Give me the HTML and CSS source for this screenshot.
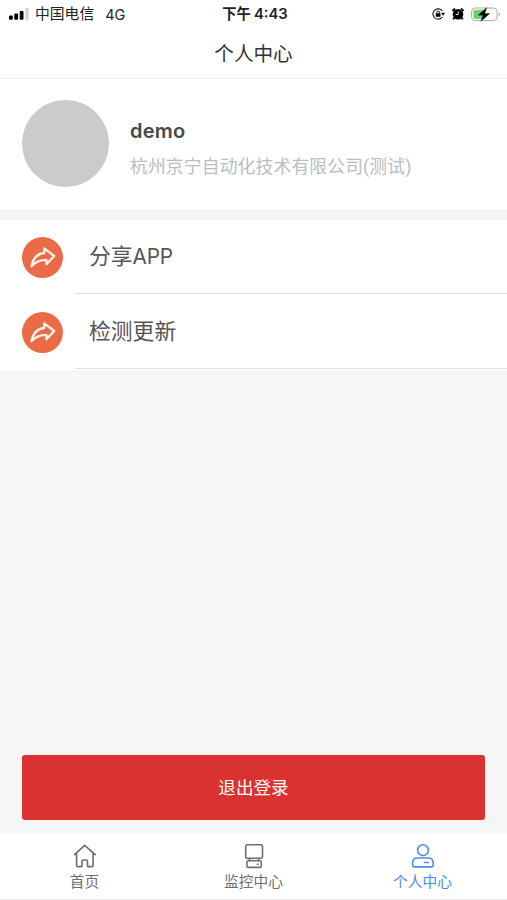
FILE: index.html
```html
<!DOCTYPE html>
<html lang="zh-CN">
<head>
<meta charset="utf-8">
<title>个人中心</title>
<link rel="stylesheet" href="styles.css">
</head>
<body>
<div class="app">
  <div class="status">
    <div class="carrier">
      <svg width="20" height="12" viewBox="0 0 20 12"><rect x="0" y="7.5" width="3.8" height="4.2" rx="1"/><rect x="5.3" y="5.5" width="3.8" height="6.2" rx="1"/><rect x="10.700" y="3" width="3.800" height="8.700" rx="1"/><rect x="16.200" y="0" width="3.600" height="11.700" rx="1" fill="#d5d5d5"/></svg>
      <span>中国电信</span><span class="network">4G</span>
    </div>
    <div class="time">下午<span class="clock">4:43</span></div>
    <div class="indicators">
      <svg width="13" height="12" viewBox="0 0 13 12"><path d="M10.400 3A5.200 5.200 0 1 0 10.400 9" fill="none" stroke="#222" stroke-width="1.200"/><path d="M9 4.800h4l-1.800 3z"/><rect x="3.800" y="5.300" width="4.700" height="3.500" rx=".5"/><path d="M4.900 5.500V4.400a1.300 1.300 0 0 1 2.600 0v1.100" fill="none" stroke="#111"/></svg>
      <svg width="12" height="12" viewBox="0 0 12 12"><circle cx="6" cy="6.200" r="5.300"/><path d="M.5 3 3 .5M11.500 3 9 .5M2.500 9.500 1.200 11.300M9.500 9.500l1.300 1.800" stroke="#111" stroke-width="2"/><path d="M6.200 3.500v3H3.800" fill="none" stroke="#fff" stroke-width=".9"/></svg>
      <svg width="30" height="15" viewBox="0 0 30 15"><rect x=".6" y="1" width="25.500" height="12.600" rx="3.400" fill="#fff" stroke="#aaa"/><rect x="2.300" y="2.700" width="12" height="9.200" rx="1.800" fill="#66d36e"/><path d="M27.700 5.200c1.800.6 1.800 3.600 0 4.200z" fill="#aaa"/><path d="M15.800.6 7 8.300h5L9.800 14.400l9-8h-5z" stroke="#111" stroke-width=".3"/></svg>
    </div>
  </div>
  <header class="title">个人中心</header>
  <section class="profile">
    <div class="avatar"></div>
    <div class="identity">
      <div class="name">demo</div>
      <div class="company">杭州京宁自动化技术有限公司(测试)</div>
    </div>
  </section>
  <nav class="menu">
    <div class="row">
      <div class="badge"><svg width="26" height="22" viewBox="0 0 26 22"><path d="M14.200 1.300 24.200 9 16.500 17.200V13.200C10 12.500 6 14.500 1.500 19.200 3 12 7.500 6.600 14.200 6z"/></svg></div>
      <div class="label">分享<span class="latin">APP</span></div>
    </div>
    <div class="row">
      <div class="badge"><svg width="26" height="22" viewBox="0 0 26 22"><path d="M14.200 1.300 24.200 9 16.500 17.200V13.200C10 12.500 6 14.500 1.500 19.200 3 12 7.500 6.600 14.200 6z"/></svg></div>
      <div class="label">检测更新</div>
    </div>
  </nav>
  <main class="content"><button class="logout">退出登录</button></main>
  <footer class="tabs">
    <div class="tab">
      <svg width="24" height="26" viewBox="0 0 24 26"><path d="M1.500 11.600 11.700 2.400 22.200 11.600M3.600 10v12.400q0 1.200 1.200 1.200h4.100v-5.200q0-1.400 1.400-1.400h2.800q1.400 0 1.400 1.400v5.200h4.400q1.200 0 1.200-1.200V10"/></svg>
      <span>首页</span>
    </div>
    <div class="tab">
      <svg width="24" height="26" viewBox="0 0 24 26"><rect x="3.700" y="1.800" width="16.800" height="13.400" rx="1.500"/><path d="M7.500 15.500v2.300M16.700 15.500v2.300M15.300 21.200h.8"/><rect x="4.900" y="17.800" width="14.400" height="6.600" rx="1.500"/></svg>
      <span>监控中心</span>
    </div>
    <div class="tab active">
      <svg width="24" height="26" viewBox="0 0 24 26"><circle cx="12" cy="7.200" r="5.400"/><path d="M1.600 22.300v-2.500q0-4.800 5.200-4.800h10.200q5.200 0 5.200 4.800v2.500q0 1.600-1.600 1.600H3.200q-1.600 0-1.600-1.600zM13.500 19.500h3.800"/></svg>
      <span>个人中心</span>
    </div>
  </footer>
</div>
</body>
</html>
```
FILE: styles.css
```css
* { box-sizing: border-box; }
body {
  margin: 0;
  background: #fff;
  color: #333;
  font-family: Roboto, "Noto Sans CJK SC", sans-serif;
}
svg { display: block; flex: none; }
.app { height: 900px; display: flex; flex-direction: column; background: #f6f6f6; overflow: hidden; }
.status {
  height: 28px;
  display: grid;
  grid-template-columns: 1fr auto 1fr;
  align-items: center;
  padding: 0 6px 0 9px;
  background: #fff;
  font-size: 14.8px;
  line-height: 27px;
  color: #222;
}
.carrier { display: flex; align-items: center; gap: 6px; }
.network { margin-left: 5px; font-family: Inter, sans-serif; font-size: 14.5px; }
.time { display: flex; gap: 3px; font-weight: 700; font-size: 14.3px; color: #222; }
.clock { font-family: Inter, sans-serif; font-weight: 600; font-size: 14.8px; }
.indicators { display: flex; justify-content: flex-end; align-items: center; gap: 7px; height: 27px; }
.title {
  height: 51px;
  padding-top: 1px;
  border-bottom: 1px solid #eee;
  background: #fff;
  text-align: center;
  font-size: 19.6px;
  line-height: 51px;
}
.profile {
  height: 130px;
  display: flex;
  padding: 21px 22px;
  gap: 21px;
  background: #fff;
}
.avatar { width: 87px; height: 87px; border-radius: 50%; background: #cbcbcb; }
.identity { padding-top: 16px; }
.name { font-family: Inter, sans-serif; font-size: 20px; line-height: 30px; font-weight: 600; color: #484848; letter-spacing: .2px; }
.company { margin-top: 8px; font-size: 17.8px; line-height: 26px; color: #b9bdc3; white-space: nowrap; letter-spacing: .15px; }
.menu { height: 150px; margin-top: 11px; background: #fff; }
.row { height: 75px; display: flex; padding-left: 22px; }
.badge {
  width: 41px;
  height: 41px;
  margin: 17px 12px 0 0;
  border-radius: 50%;
  background: #eb6b49;
  display: flex;
  align-items: center;
  justify-content: center;
}
.badge path { fill: none; stroke: #fff3e9; stroke-width: 2.3; stroke-linejoin: round; }
.label {
  flex: 1;
  height: 74px;
  padding-left: 14px;
  border-bottom: 1px solid #dfe3e6;
  font-size: 21.8px;
  line-height: 74px;
  color: #555;
}
.latin { font-family: Inter, sans-serif; font-size: 20.8px; letter-spacing: -.3px; }
.content { flex: 1; display: flex; align-items: flex-end; padding: 0 22px 14px; }
.logout {
  width: 100%;
  height: 65px;
  border: 0;
  border-radius: 3px;
  background: #da3231;
  color: #fff;
  font: 17.6px/65px Roboto, "Noto Sans CJK SC", sans-serif;
}
.tabs {
  height: 66px;
  display: grid;
  grid-template-columns: repeat(3, 1fr);
  border-bottom: 1px solid #eee;
  background: #fff;
}
.tab { display: flex; flex-direction: column; align-items: center; padding-top: 9px; font-size: 14.7px; line-height: 27px; color: #6e6e6e; }
.tab svg { fill: none; stroke: currentColor; stroke-width: 1.6; stroke-linecap: round; stroke-linejoin: round; }
.active { color: #4b8cec; }
```
